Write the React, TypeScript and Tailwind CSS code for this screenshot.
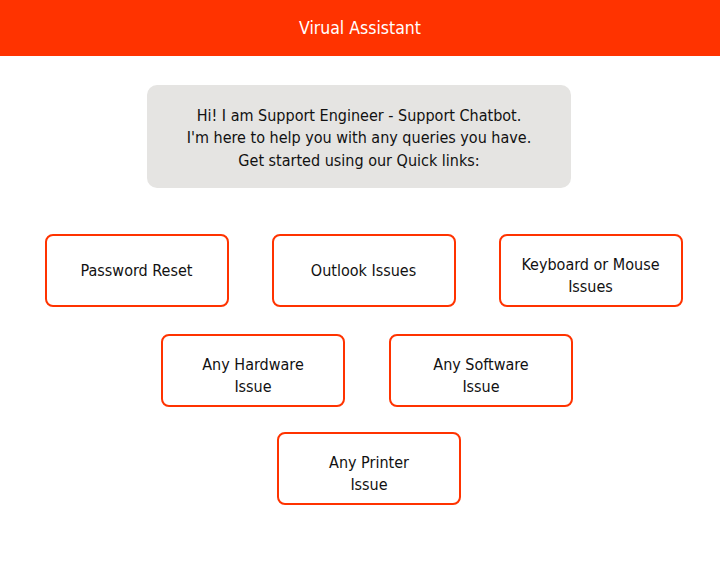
import React from "react";

const font = { fontFamily: '"DejaVu Sans Condensed", "DejaVu Sans", sans-serif' };

function Btn({ children, two }: { children: React.ReactNode; two?: boolean }) {
  return (
    <div
      className={
        "w-[184px] h-[73px] shrink-0 border-2 border-[#ff3300] rounded-[8px] flex items-center justify-center text-center text-[16px] leading-[22px] text-[#111] px-2 " +
        (two ? "pt-[10px]" : "")
      }
    >
      {children}
    </div>
  );
}

export default function App() {
  return (
    <div className="w-[720px] h-[576px] bg-white" style={font}>
      <div className="h-[56px] bg-[#ff3300] flex items-center justify-center text-white text-[17.5px]">
        Virual Assistant
      </div>
      <div className="flex justify-center pt-[29px]">
        <div className="w-[424px] h-[103px] bg-[#e5e4e2] rounded-[10px] flex flex-col items-center justify-center pt-[4px] text-[16px] leading-[22.5px] text-[#111] text-center ml-[-2px]">
          <div>Hi! I am Support Engineer - Support Chatbot.</div>
          <div>I'm here to help you with any queries you have.</div>
          <div>Get started using our Quick links:</div>
        </div>
      </div>
      <div className="flex flex-col pt-[46px]">
        <div className="flex justify-center pl-[7px] gap-[43px]">
          <Btn>Password Reset</Btn>
          <Btn>Outlook Issues</Btn>
          <Btn two>Keyboard or Mouse<br />Issues</Btn>
        </div>
        <div className="flex justify-center pl-[14px] gap-[44px] mt-[27px]">
          <Btn two>Any Hardware<br />Issue</Btn>
          <Btn two>Any Software<br />Issue</Btn>
        </div>
        <div className="flex justify-center pl-[18px] mt-[25px]">
          <Btn two>Any Printer<br />Issue</Btn>
        </div>
      </div>
    </div>
  );
}
